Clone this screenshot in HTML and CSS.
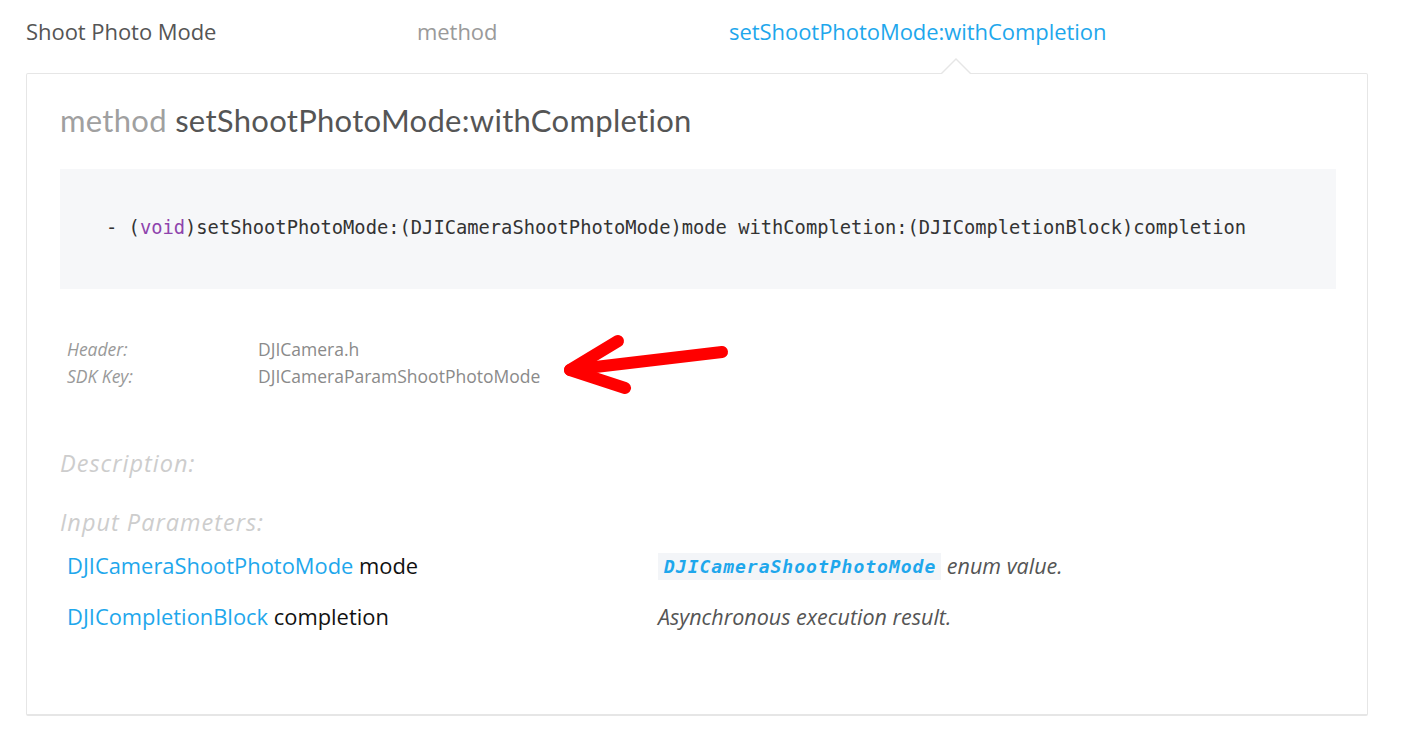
FILE: index.html
```html
<!DOCTYPE html>
<html>
<head>
<meta charset="utf-8">
<link rel="stylesheet" href="styles.css">
</head>
<body>
<nav class="crumbs">
  <span class="crumb crumb-root">Shoot Photo Mode</span>
  <span class="crumb crumb-kind">method</span>
  <span class="crumb crumb-active">setShootPhotoMode:withCompletion</span>
</nav>
<section class="card">
  <h1 class="title"><span class="title-kind">method</span> setShootPhotoMode:withCompletion</h1>
  <div class="code-block"><code>- (<span class="kw">void</span>)setShootPhotoMode:(DJICameraShootPhotoMode)mode withCompletion:(DJICompletionBlock)completion</code></div>
  <dl class="meta">
    <dt>Header:</dt><dd>DJICamera.h</dd>
    <dt>SDK Key:</dt><dd>DJICameraParamShootPhotoMode</dd>
  </dl>
  <h2 class="section-label desc-label">Description:</h2>
  <h2 class="section-label params-label">Input Parameters:</h2>
  <div class="params">
    <div class="param-name"><span class="type">DJICameraShootPhotoMode</span> mode</div>
    <div class="param-desc"><code class="chip">DJICameraShootPhotoMode</code> enum value.</div>
    <div class="param-name"><span class="type">DJICompletionBlock</span> completion</div>
    <div class="param-desc">Asynchronous execution result.</div>
  </div>
</section>
<svg class="annot-arrow" width="200" height="80" viewBox="0 0 200 80">
  <g fill="none" stroke="#ff0000" stroke-width="12" stroke-linecap="round" stroke-linejoin="round">
    <path d="M174 24 L22 42"/>
    <path d="M70 13 L22 42 L77 60"/>
  </g>
</svg>
</body>
</html>
```
FILE: styles.css
```css
* { box-sizing: border-box; }
html, body { margin: 0; padding: 0; background: #ffffff; }
body {
  position: relative;
  width: 1412px;
  height: 744px;
  overflow: hidden;
  font-family: "Open Sans", "Noto Sans", sans-serif;
}
.crumbs {
  display: grid;
  grid-template-columns: 391px 312px 1fr;
  padding: 16px 0 0 26px;
  height: 73px;
  font-size: 22px;
  line-height: 30px;
  letter-spacing: -0.05px;
}
.crumb-root { color: #555555; }
.crumb-kind { color: #9a9a9a; }
.crumb-active { color: #1ea7ec; }

.card {
  position: relative;
  margin-left: 26px;
  width: 1342px;
  height: 643px;
  border: 1px solid #e6e6e6;
  border-bottom-width: 2px;
  border-radius: 2px;
  padding: 0 31px 0 33px;
}
.card::before,
.card::after {
  content: "";
  position: absolute;
  left: 914px;
  width: 0; height: 0;
  border-left: 15px solid transparent;
  border-right: 15px solid transparent;
}
.card::before { top: -16px; border-bottom: 15px solid #e6e6e6; }
.card::after { top: -14.5px; left: 915px; border-left-width: 14px; border-right-width: 14px; border-bottom: 14px solid #ffffff; }

.title {
  margin: 28px 0 0 0;
  font-family: Lato, "Open Sans", sans-serif;
  font-weight: 400;
  font-size: 31px;
  line-height: 36px;
  color: #555555;
  letter-spacing: 0.3px;
}
.title-kind { color: #a0a0a0; }

.code-block {
  margin-top: 31px;
  height: 120px;
  background: #f6f7f9;
  display: flex;
  align-items: center;
  padding: 0 0 4px 46px;
}
.code-block code {
  font-family: "DejaVu Sans Mono", monospace;
  font-size: 18.75px;
  color: #333333;
  letter-spacing: 0;
}
.kw { color: #8e44ad; }

.meta {
  display: grid;
  grid-template-columns: 191px 1fr;
  margin: 47px 0 0 7px;
  font-size: 17.5px;
  line-height: 27px;
}
.meta dt { font-style: italic; color: #999999; margin: 0; }
.meta dd { color: #8a8a8a; margin: 0; }

.section-label {
  margin: 0;
  font-family: "Open Sans", sans-serif;
  font-weight: 400;
  font-style: italic;
  font-size: 23.5px;
  line-height: 30px;
  letter-spacing: 1px;
  color: #cdcdcd;
}
.desc-label { margin-top: 58px; }
.params-label { margin-top: 29px; }

.params {
  display: grid;
  grid-template-columns: 591px 1fr;
  row-gap: 21px;
  margin: 14px 0 0 7px;
  font-size: 21.5px;
  line-height: 30px;
}
.param-name { color: #111111; font-family: "Open Sans", sans-serif; font-size: 21.9px; }
.type { color: #1ea7ec; }
.param-desc { color: #555555; font-style: italic; }
.chip {
  display: inline-block;
  background: #f3f5f8;
  color: #1ea7ec;
  font-family: "DejaVu Sans Mono", monospace;
  font-style: italic;
  font-weight: bold;
  font-size: 18px;
  letter-spacing: 1px;
  line-height: 27px;
  padding: 0 5px 0 6px;
  vertical-align: 1px;
}

.annot-arrow {
  position: absolute;
  left: 548px;
  top: 328px;
}
```
